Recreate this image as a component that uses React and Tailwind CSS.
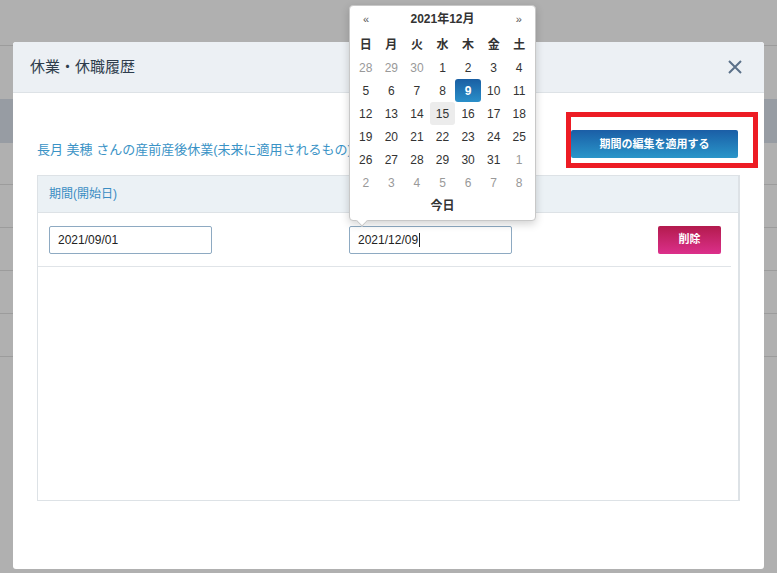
import React from 'react';

const FONT = { fontFamily: '"Liberation Sans", "Noto Sans CJK JP", sans-serif' };

// calendar weeks for 2021/12, muted = outside the month
const weeks = [
  [[28, 1], [29, 1], [30, 1], [1], [2], [3], [4]],
  [[5], [6], [7], [8], [9], [10], [11]],
  [[12], [13], [14], [15], [16], [17], [18]],
  [[19], [20], [21], [22], [23], [24], [25]],
  [[26], [27], [28], [29], [30], [31], [1, 1]],
  [[2, 1], [3, 1], [4, 1], [5, 1], [6, 1], [7, 1], [8, 1]],
];

const dayNames = ['日', '月', '火', '水', '木', '金', '土'];

const DatePicker = () => (
  <div className="absolute left-[349px] top-[5px] w-[187px] rounded-[4px] border border-[#c8c8c8] bg-white px-[3px] pt-[3px] pb-[3px] shadow-[0_3px_8px_rgba(0,0,0,0.18)]">
    <div className="flex h-[20px] items-center justify-between px-[10px] text-[12px] font-bold text-[#333]">
      <span className="text-[11px] font-normal text-[#555]">«</span>
      <span>2021年12月</span>
      <span className="text-[11px] font-normal text-[#555]">»</span>
    </div>
    <div className="mt-[4px] grid grid-cols-7">
      {dayNames.map((d) => (
        <div key={d} className="flex h-[23px] items-center justify-center text-[12px] font-bold text-[#333]">
          {d}
        </div>
      ))}
    </div>
    {weeks.map((week, i) => (
      <div key={i} className="grid grid-cols-7">
        {week.map(([n, muted], j) => {
          const selected = !muted && n === 9;
          const today = !muted && n === 15;
          return (
            <div
              key={j}
              className={`flex h-[23px] items-center justify-center rounded-[3px] text-[12px] ${
                selected
                  ? 'bg-gradient-to-b from-[#1a5fa3] to-[#2a8fc9] font-bold text-white'
                  : today
                  ? 'bg-[#ececec] text-[#333]'
                  : muted
                  ? 'text-[#999]'
                  : 'text-[#333]'
              }`}
            >
              {n}
            </div>
          );
        })}
      </div>
    ))}
    <div className="flex h-[23px] items-center justify-center text-[12px] font-bold text-[#333]">今日</div>
    {/* pointer */}
    <div className="absolute -bottom-[5px] left-[8px] h-[8px] w-[8px] rotate-45 border-r border-b border-[#c8c8c8] bg-white" />
  </div>
);

const DateBox = ({ value, caret }) => (
  <div className="flex h-[28px] w-[163px] items-center rounded-[2px] border border-[#8eaac2] bg-white pl-[8px] text-[12px] text-[#222]">
    {value}
    {caret && <span className="ml-[1px] h-[14px] w-[1px] bg-[#222]" />}
  </div>
);

export default function App() {
  return (
    <div className="relative h-[573px] w-[777px] overflow-hidden bg-[#b0b0b0]" style={FONT}>
      {/* page behind the overlay */}
      <div className="h-[46px] border-b border-[#9c9c9c]" />
      <div className="h-[53px]" />
      <div className="h-[44px] bg-[#979ca3]" />
      <div className="h-[42px] border-b border-[#9c9c9c]" />
      <div className="h-[43px] border-b border-[#9c9c9c]" />
      <div className="h-[43px] border-b border-[#9c9c9c]" />
      <div className="h-[43px] border-b border-[#9c9c9c]" />
      <div className="h-[43px] border-b border-[#9c9c9c]" />

      {/* modal */}
      <div className="absolute left-[13px] top-[42px] flex h-[527px] w-[751px] flex-col overflow-hidden rounded-[3px] bg-white">
        <div className="flex h-[51px] shrink-0 items-center justify-between border-b border-[#dde2e6] bg-[#ecf0f4] pl-[17px] pr-[22px]">
          <span className="text-[15px] text-[#2e3d4c]">休業・休職履歴</span>
          <svg width="14" height="14" viewBox="0 0 14 14">
            <path d="M1 1L13 13M13 1L1 13" stroke="#5b7189" strokeWidth="2" />
          </svg>
        </div>

        <div className="px-[24px] pt-[37px]">
          <div className="flex h-[28px] items-start justify-between">
            <span className="mt-[10px] text-[13px] leading-[20px] text-[#3a93c6]">
              長月 美穂 さんの産前産後休業(未来に適用されるもの)
            </span>
            <button className="mr-[2px] h-[28px] w-[167px] rounded-[2px] bg-gradient-to-b from-[#1b5ea6] to-[#2b96c9] text-[11px] font-bold text-white">
              期間の編集を適用する
            </button>
          </div>

          <div className="mt-[17px] h-[326px] border border-[#dde2e6] border-r-2">
            <div className="flex h-[37px] items-center border-b border-[#dde2e6] bg-[#ebf1f5] text-[12px] text-[#3a8dc3]">
              <div className="w-[300px] pl-[11px]">期間(開始日)</div>
              <div className="w-[300px] pl-[11px]">期間(終了日)</div>
            </div>
            <div className="mr-[7px] flex h-[54px] items-center border-b border-[#e0e4e8]">
              <div className="w-[300px] pl-[11px]">
                <DateBox value="2021/09/01" />
              </div>
              <div className="w-[300px] pl-[11px]">
                <DateBox value="2021/12/09" caret />
              </div>
              <button className="ml-auto mr-[10px] h-[28px] w-[63px] rounded-[2px] bg-gradient-to-b from-[#b31a4d] to-[#dc2f8b] text-[11px] font-bold text-white">
                削除
              </button>
            </div>
          </div>
        </div>
      </div>

      {/* highlight box */}
      <div className="absolute left-[566px] top-[112px] h-[56px] w-[192px] border-[5px] border-[#ed1c24]" />

      <DatePicker />
    </div>
  );
}
